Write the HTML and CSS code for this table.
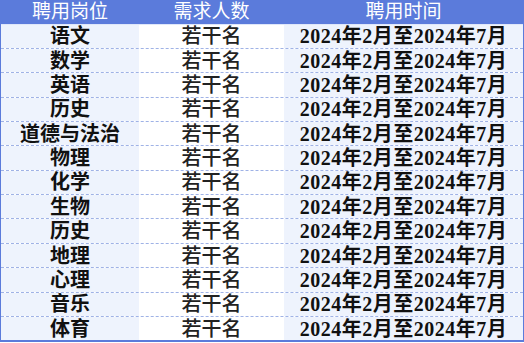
FILE: index.html
```html
<!DOCTYPE html>
<html lang="zh">
<head>
<meta charset="utf-8">
<link rel="stylesheet" href="styles.css">
</head>
<body>
<div class="sheet">
  <div class="row head">
    <div class="cell c1">聘用岗位</div>
    <div class="cell c2">需求人数</div>
    <div class="cell c3">聘用时间</div>
  </div>
  <div class="row"><div class="cell c1">语文</div><div class="cell c2">若干名</div><div class="cell c3">2024年2月至2024年7月</div></div>
  <div class="row"><div class="cell c1">数学</div><div class="cell c2">若干名</div><div class="cell c3">2024年2月至2024年7月</div></div>
  <div class="row"><div class="cell c1">英语</div><div class="cell c2">若干名</div><div class="cell c3">2024年2月至2024年7月</div></div>
  <div class="row"><div class="cell c1">历史</div><div class="cell c2">若干名</div><div class="cell c3">2024年2月至2024年7月</div></div>
  <div class="row"><div class="cell c1">道德与法治</div><div class="cell c2">若干名</div><div class="cell c3">2024年2月至2024年7月</div></div>
  <div class="row"><div class="cell c1">物理</div><div class="cell c2">若干名</div><div class="cell c3">2024年2月至2024年7月</div></div>
  <div class="row"><div class="cell c1">化学</div><div class="cell c2">若干名</div><div class="cell c3">2024年2月至2024年7月</div></div>
  <div class="row"><div class="cell c1">生物</div><div class="cell c2">若干名</div><div class="cell c3">2024年2月至2024年7月</div></div>
  <div class="row"><div class="cell c1">历史</div><div class="cell c2">若干名</div><div class="cell c3">2024年2月至2024年7月</div></div>
  <div class="row"><div class="cell c1">地理</div><div class="cell c2">若干名</div><div class="cell c3">2024年2月至2024年7月</div></div>
  <div class="row"><div class="cell c1">心理</div><div class="cell c2">若干名</div><div class="cell c3">2024年2月至2024年7月</div></div>
  <div class="row"><div class="cell c1">音乐</div><div class="cell c2">若干名</div><div class="cell c3">2024年2月至2024年7月</div></div>
  <div class="row last"><div class="cell c1">体育</div><div class="cell c2">若干名</div><div class="cell c3">2024年2月至2024年7月</div></div>
</div>
</body>
</html>
```

FILE: styles.css
```css
html, body {
  margin: 0;
  padding: 0;
  background: #ffffff;
}

.sheet {
  width: 522px;
  border-left: 1px solid #5b7bdb;
  border-right: 2px solid #5b7bdb;
  border-bottom: 2px solid #5b7bdb;
  font-family: "Liberation Serif", "Noto Sans CJK SC", serif;
  font-size: 20px;
  font-weight: bold;
  color: #111111;
}

.row {
  display: grid;
  grid-template-columns: 138px 145px 1fr;
  height: 24.36px;
  box-sizing: border-box;
  border-bottom: 1px dashed #9fb2e6;
}

.row.last {
  border-bottom: none;
  height: 23.4px;
}

.cell {
  display: flex;
  align-items: center;
  justify-content: center;
  line-height: 1;
  white-space: nowrap;
}

.c1, .c3 {
  background: #eef3fd;
}

.c2 {
  background: #ffffff;
  font-weight: 500;
  color: #222222;
}

.c3 {
  letter-spacing: 0.5px;
}

.head {
  height: 24.6px;
  background: #5b7bdb;
  border-bottom: 1px solid #dfe7fa;
}

.head .cell {
  background: #5b7bdb;
  color: #ffffff;
  font-weight: normal;
  font-size: 19px;
  letter-spacing: 0;
}
```
